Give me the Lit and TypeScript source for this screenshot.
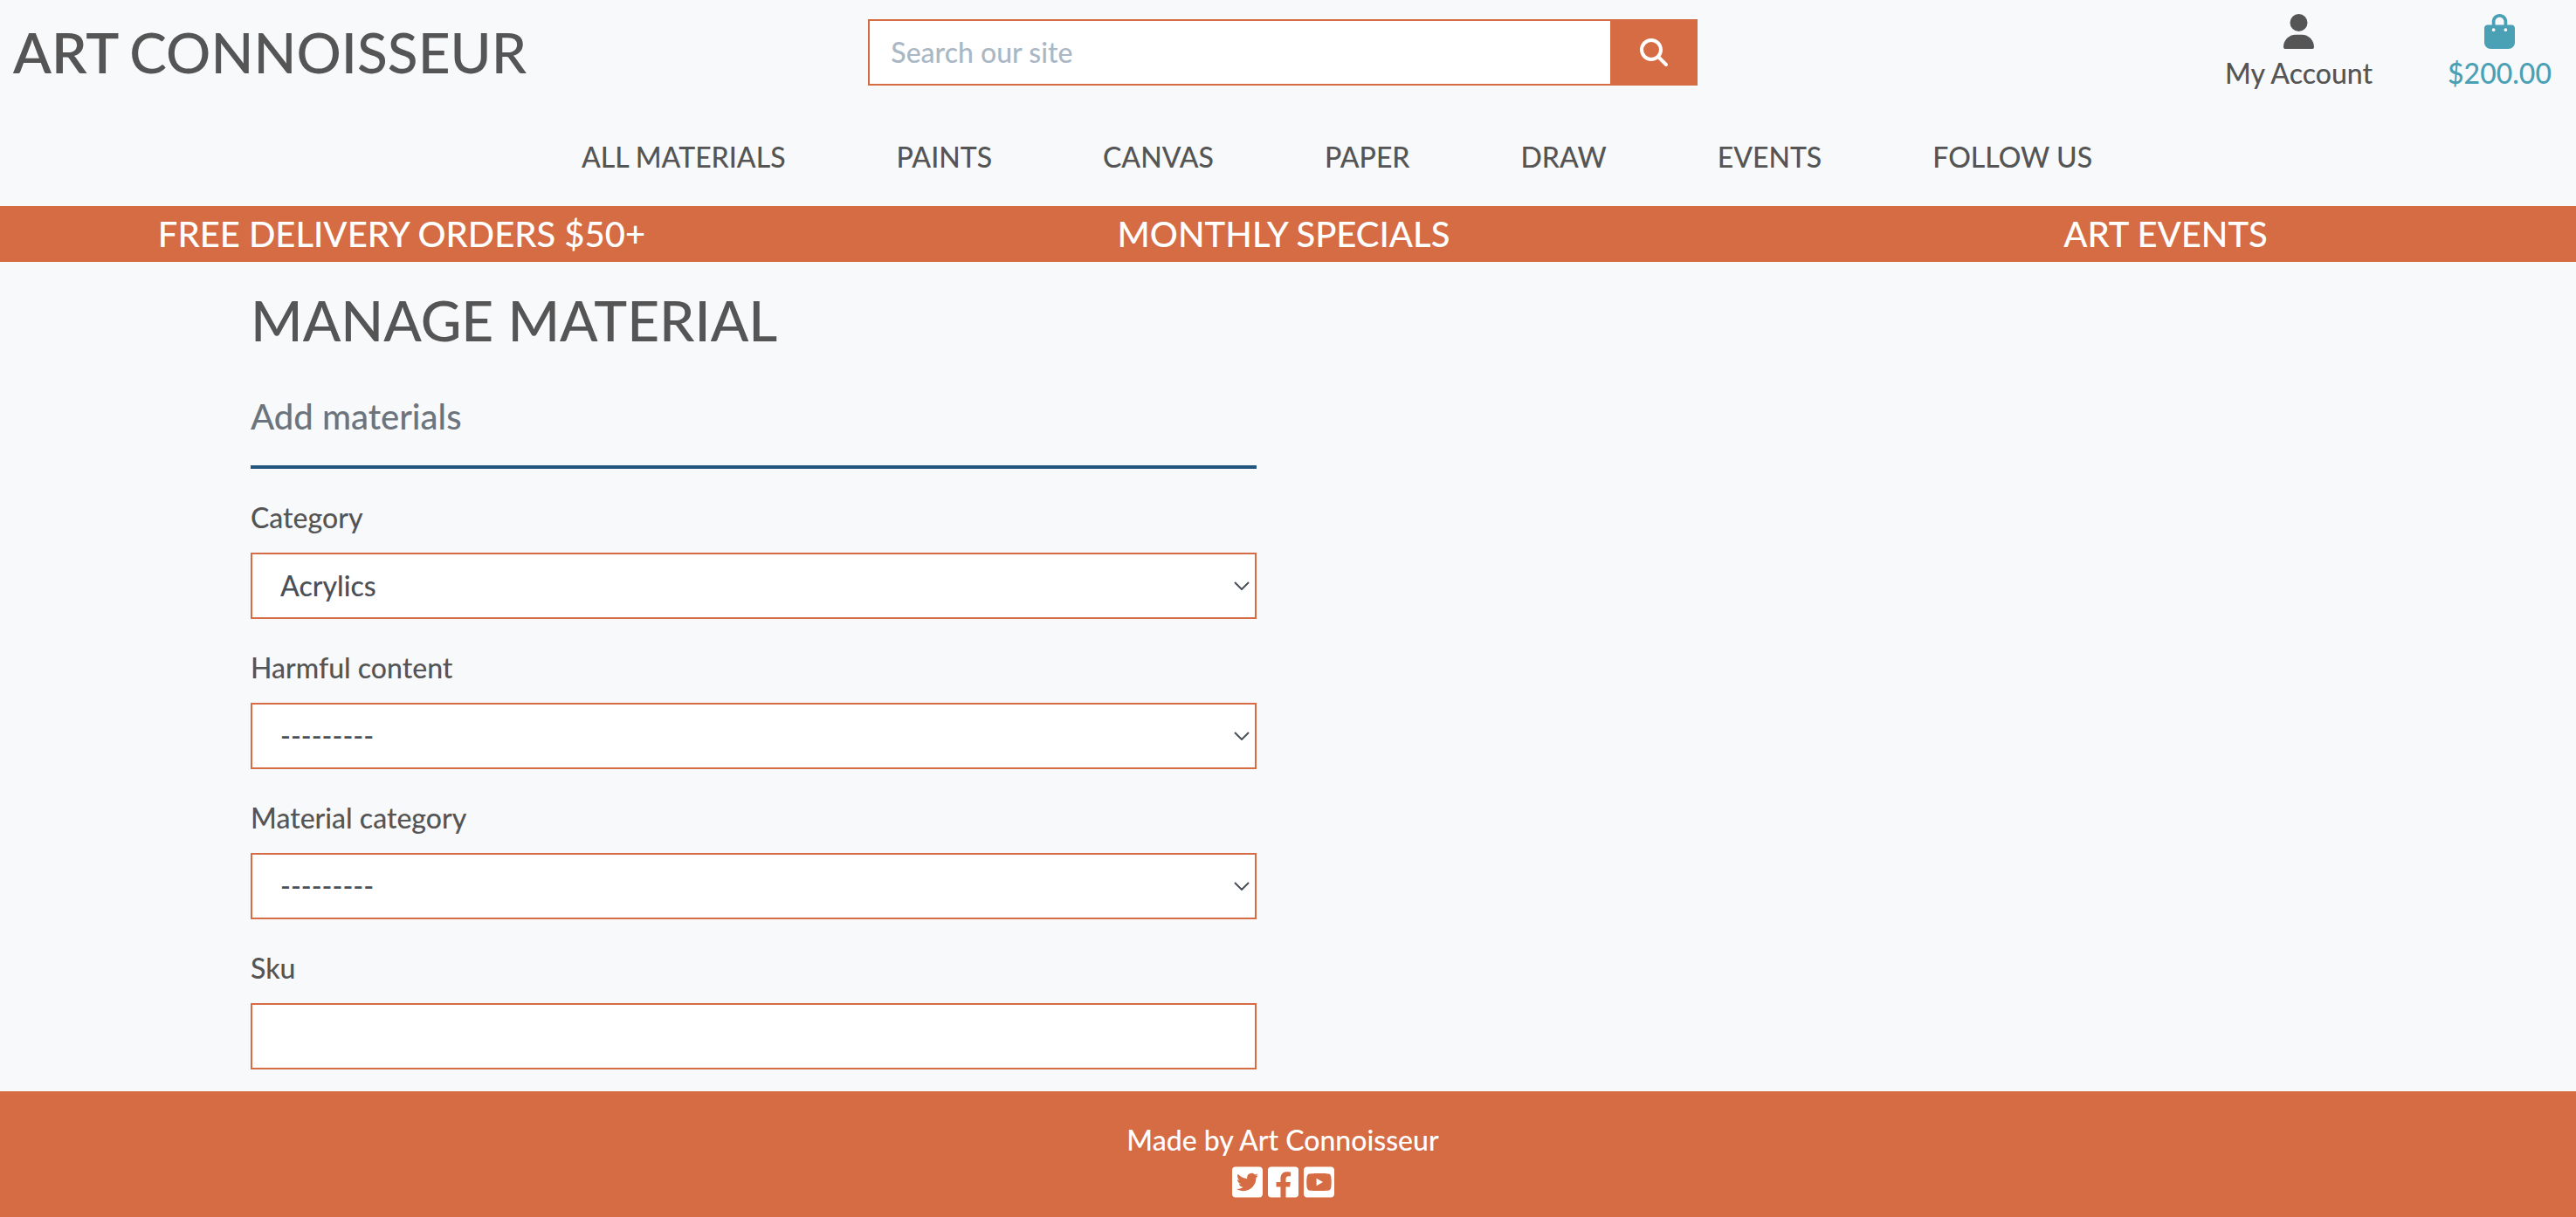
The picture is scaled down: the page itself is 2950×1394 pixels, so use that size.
import { LitElement, html, css, svg } from "lit";
import { customElement } from "lit/decorators.js";

const icons = {
  search: {
    box: "0 0 512 512",
    d: "M416 208c0 45.9-14.9 88.3-40 122.7L502.6 457.4c12.5 12.5 12.5 32.8 0 45.3s-32.8 12.5-45.3 0L330.7 376c-34.4 25.2-76.8 40-122.7 40C93.1 416 0 322.9 0 208S93.1 0 208 0S416 93.1 416 208zM208 352a144 144 0 1 0 0-288 144 144 0 1 0 0 288z",
  },
  user: {
    box: "0 0 448 512",
    d: "M224 256A128 128 0 1 0 224 0a128 128 0 1 0 0 256zm-45.7 48C79.8 304 0 383.8 0 482.3C0 498.7 13.3 512 29.7 512H418.3c16.4 0 29.7-13.3 29.7-29.7C448 383.8 368.2 304 269.7 304H178.3z",
  },
  bag: {
    box: "0 0 448 512",
    d: "M160 112c0-35.3 28.7-64 64-64s64 28.7 64 64v48H160V112zm-48 48H48c-26.5 0-48 21.5-48 48V416c0 53 43 96 96 96H352c53 0 96-43 96-96V208c0-26.5-21.5-48-48-48H336V112C336 50.1 285.9 0 224 0S112 50.1 112 112v48zm24 48a24 24 0 1 1 0 48 24 24 0 1 1 0-48zm152 24a24 24 0 1 1 48 0 24 24 0 1 1 -48 0z",
  },
  twitter: {
    box: "0 0 448 512",
    d: "M400 32H48C21.5 32 0 53.5 0 80v352c0 26.5 21.5 48 48 48h352c26.5 0 48-21.5 48-48V80c0-26.5-21.5-48-48-48zm-48.9 158.8c.2 2.8.2 5.7.2 8.5 0 86.7-66 186.6-186.6 186.6-37.2 0-71.7-10.8-100.7-29.4 5.3.6 10.4.8 15.8.8 30.7 0 58.9-10.4 81.4-28-28.8-.6-53-19.5-61.3-45.5 10.1 1.5 19.2 1.5 29.6-1.2-30-6.1-52.5-32.5-52.5-64.4v-.8c8.7 4.9 18.9 7.9 29.6 8.3a65.447 65.447 0 0 1-29.2-54.6c0-12.2 3.2-23.4 8.9-33.1 32.3 39.8 80.8 65.8 135.2 68.6-9.3-44.5 24-80.6 64-80.6 18.9 0 35.9 7.9 47.9 20.7 14.8-2.8 29-8.3 41.6-15.8-4.9 15.2-15.2 28-28.8 36.1 13.2-1.4 26-5.1 37.8-10.2-8.9 13.1-20.1 24.7-32.9 34z",
  },
  facebook: {
    box: "0 0 448 512",
    d: "M400 32H48A48 48 0 0 0 0 80v352a48 48 0 0 0 48 48h137.25V327.69h-63V256h63v-54.64c0-62.15 37-96.48 93.67-96.48 27.14 0 55.52 4.84 55.52 4.84v61h-31.27c-30.81 0-40.42 19.12-40.42 38.73V256h68.78l-11 71.69h-57.78V480H400a48 48 0 0 0 48-48V80a48 48 0 0 0-48-48z",
  },
  youtube: {
    box: "0 0 448 512",
    d: "M186.8 202.1l95.2 54.1-95.2 54.1V202.1zM448 80v352c0 26.5-21.5 48-48 48H48c-26.5 0-48-21.5-48-48V80c0-26.5 21.5-48 48-48h352c26.5 0 48 21.5 48 48zm-42 176.3s0-59.6-7.6-88.2c-4.2-15.8-16.5-28.2-32.2-32.4C337.9 128 224 128 224 128s-113.9 0-142.2 7.7c-15.7 4.2-28 16.6-32.2 32.4-7.6 28.5-7.6 88.2-7.6 88.2s0 59.6 7.6 88.2c4.2 15.8 16.5 27.7 32.2 31.9C110.1 384 224 384 224 384s113.9 0 142.2-7.7c15.7-4.2 28-16.1 32.2-31.9 7.6-28.5 7.6-88.1 7.6-88.1z",
  },
};

type IconName = keyof typeof icons;

const icon = (name: IconName) => html`
  <svg class="icon icon-${name}" viewBox=${icons[name].box} aria-hidden="true">
    ${svg`<path d=${icons[name].d}></path>`}
  </svg>
`;

const base = css`
  * {
    box-sizing: border-box;
  }
  a {
    color: inherit;
    text-decoration: none;
  }
  .icon {
    display: block;
    width: 35px;
    height: 40px;
    fill: currentColor;
  }
`;

@customElement("site-header")
export class SiteHeader extends LitElement {
  static styles = [
    base,
    css`
      :host {
        display: block;
      }
      .top {
        display: grid;
        grid-template-columns: repeat(3, 1fr);
        align-items: start;
        padding-top: 16px;
      }
      .logo {
        display: flex;
        gap: 12px;
        padding: 5px 0 0 15px;
        font-size: 64px;
        line-height: 77px;
        white-space: nowrap;
      }
      .logo strong {
        font-weight: 600;
      }
      .search {
        display: flex;
        height: 76px;
        margin: 6px 23px 0 11px;
      }
      .search-input {
        flex: 1;
        min-width: 0;
        padding: 0 24px;
        border: 2px solid #d66c44;
        border-right: 0;
        border-radius: 0;
        background: #fff;
        color: #495057;
        font: inherit;
        outline: none;
      }
      .search-input::placeholder {
        color: #aab7c4;
        opacity: 1;
      }
      .search-button {
        display: flex;
        align-items: center;
        justify-content: center;
        width: 100px;
        padding: 0;
        border: 0;
        background: #d66c44;
        color: #fff;
      }
      .icon-search {
        width: 32px;
        height: 32px;
      }
      .account {
        display: flex;
        justify-content: flex-end;
        gap: 86px;
        padding-right: 28px;
      }
      .account-link {
        display: flex;
        flex-direction: column;
        align-items: center;
        gap: 4px;
      }
      .bag {
        color: #4aa0b5;
      }
      .menu {
        display: flex;
        justify-content: center;
        gap: 127px;
        margin: 0;
        padding: 48px 0 32px 112px;
        list-style: none;
      }
    `,
  ];

  private links = ["ALL MATERIALS", "PAINTS", "CANVAS", "PAPER", "DRAW", "EVENTS", "FOLLOW US"];

  render() {
    return html`
      <header>
        <div class="top">
          <a class="logo" href="#"><strong>ART</strong> <span>CONNOISSEUR</span></a>
          <form class="search" role="search">
            <input class="search-input" type="text" placeholder="Search our site" aria-label="Search our site" />
            <button class="search-button" type="button" aria-label="Search">${icon("search")}</button>
          </form>
          <div class="account">
            <a class="account-link" href="#">${icon("user")}<span>My Account</span></a>
            <a class="account-link bag" href="#">${icon("bag")}<span>$200.00</span></a>
          </div>
        </div>
        <nav>
          <ul class="menu">
            ${this.links.map((label) => html`<li><a href="#">${label}</a></li>`)}
          </ul>
        </nav>
      </header>
    `;
  }
}

@customElement("promo-banner")
export class PromoBanner extends LitElement {
  static styles = [
    base,
    css`
      :host {
        display: block;
        overflow: hidden;
        background: #d66c44;
        color: #fff;
      }
      .offers {
        display: grid;
        grid-template-columns: repeat(3, 1fr);
        margin: 0 -35px 0 -45px;
        padding: 8px 0;
      }
      .offer {
        margin: 0;
        font-size: 40px;
        font-weight: inherit;
        line-height: 48px;
        text-align: center;
      }
    `,
  ];

  render() {
    return html`
      <div class="offers">
        <h4 class="offer">FREE DELIVERY ORDERS $50+</h4>
        <h4 class="offer"><a href="#">MONTHLY SPECIALS</a></h4>
        <h4 class="offer"><a href="#">ART EVENTS</a></h4>
      </div>
    `;
  }
}

@customElement("material-form")
export class MaterialForm extends LitElement {
  static styles = [
    base,
    css`
      :host {
        display: block;
        width: 100%;
        max-width: 2376px;
        margin: 0 auto;
        padding: 28px 0 24px;
      }
      .content {
        width: calc(50% - 36px);
      }
      .title {
        margin: 0 0 48px;
        font-size: 64px;
        font-weight: inherit;
        line-height: 77px;
        white-space: nowrap;
      }
      .subtitle {
        margin: 0;
        color: #6c757d;
        font-size: 40px;
        font-weight: inherit;
        line-height: 48px;
      }
      .rule {
        height: 4px;
        margin: 32px 0;
        border: 0;
        background: #24557f;
      }
      .fields {
        display: grid;
        gap: 32px;
      }
      .field {
        display: grid;
        gap: 16px;
      }
      .control {
        display: grid;
        align-items: center;
      }
      .box {
        grid-area: 1 / 1;
        width: 100%;
        height: 76px;
        padding: 0 32px;
        border: 2px solid #d66c44;
        border-radius: 0;
        background: #fff;
        color: #495057;
        font: inherit;
        outline: none;
        appearance: none;
      }
      .chevron {
        grid-area: 1 / 1;
        justify-self: end;
        width: 18px;
        height: 10px;
        margin-right: 8px;
        fill: none;
        stroke: #495057;
        stroke-width: 2;
        pointer-events: none;
      }
    `,
  ];

  private selects = [
    { id: "category", label: "Category", value: "Acrylics" },
    { id: "harmful", label: "Harmful content", value: "---------" },
    { id: "material", label: "Material category", value: "---------" },
  ];

  render() {
    return html`
      <div class="content">
        <h2 class="title">MANAGE MATERIAL</h2>
        <h5 class="subtitle">Add materials</h5>
        <hr class="rule" />
        <form class="fields">
          ${this.selects.map(
            (s) => html`
              <div class="field">
                <label for=${s.id}>${s.label}</label>
                <div class="control">
                  <select class="box" id=${s.id}>
                    <option>${s.value}</option>
                  </select>
                  <svg class="chevron" viewBox="0 0 18 10" aria-hidden="true">
                    <path d="M1 1l8 8 8-8"></path>
                  </svg>
                </div>
              </div>
            `
          )}
          <div class="field">
            <label for="sku">Sku</label>
            <div class="control">
              <input class="box" id="sku" type="text" />
            </div>
          </div>
        </form>
      </div>
    `;
  }
}

@customElement("site-footer")
export class SiteFooter extends LitElement {
  static styles = [
    base,
    css`
      :host {
        display: block;
        padding: 32px 12px 20px 0;
        background: #d66c44;
        color: #fff;
      }
      .credit {
        margin: 0 0 4px;
        text-align: center;
      }
      .social {
        display: flex;
        justify-content: center;
        gap: 6px;
      }
    `,
  ];

  render() {
    return html`
      <footer>
        <p class="credit">Made by Art Connoisseur</p>
        <div class="social">
          <a href="#" aria-label="Twitter">${icon("twitter")}</a>
          <a href="#" aria-label="Facebook">${icon("facebook")}</a>
          <a href="#" aria-label="YouTube">${icon("youtube")}</a>
        </div>
      </footer>
    `;
  }
}

@customElement("app-root")
export class AppRoot extends LitElement {
  static styles = css`
    :host {
      display: flex;
      flex-direction: column;
      min-height: 100vh;
      background: #f8f9fb;
      color: #555;
      font-family: Lato, "Liberation Sans", sans-serif;
      font-size: 32px;
      font-weight: 500;
      line-height: 48px;
    }
    .main {
      flex: 1;
    }
  `;

  render() {
    return html`
      <site-header></site-header>
      <promo-banner></promo-banner>
      <main class="main"><material-form></material-form></main>
      <site-footer></site-footer>
    `;
  }
}
